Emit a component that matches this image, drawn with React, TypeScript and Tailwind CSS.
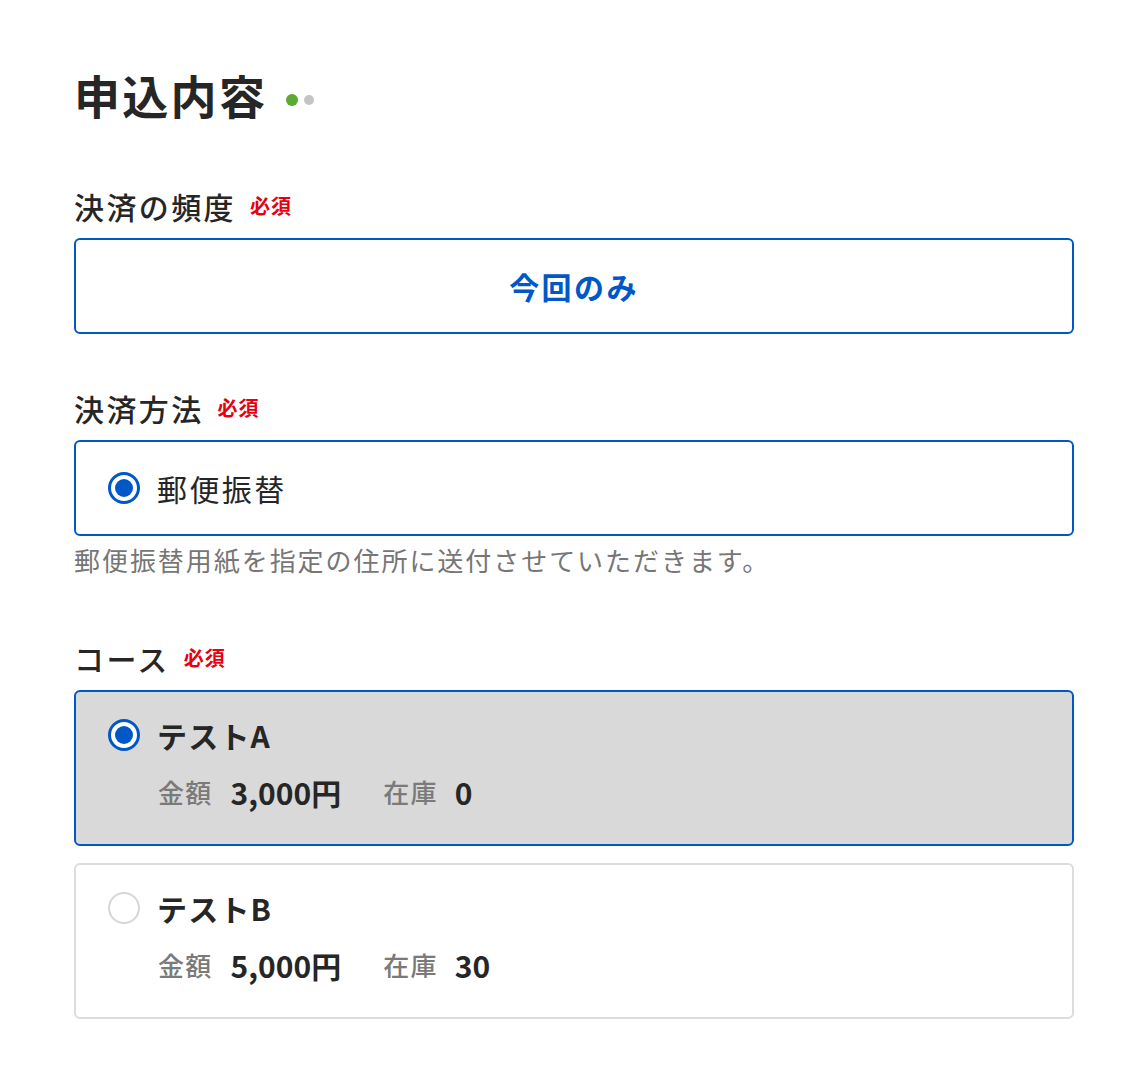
import React from "react";

const font = { fontFamily: '"Noto Sans CJK JP", "Noto Sans", sans-serif' };

function Required() {
  return (
    <span className="ml-[14px] text-[20px] font-bold text-[#e60012] tracking-[0.05em] leading-none">
      必須
    </span>
  );
}

function Label({ children }: { children: React.ReactNode }) {
  return (
    <div className="flex items-center h-[44px] mb-[10px]">
      <span className="text-[30px] font-medium text-[#262626] tracking-[0.08em] leading-none">
        {children}
      </span>
      <Required />
    </div>
  );
}

function Radio({ checked }: { checked: boolean }) {
  return checked ? (
    <span className="flex items-center justify-center w-[32px] h-[32px] rounded-full border-[3px] border-[#0057c8] bg-white shrink-0">
      <span className="w-[18px] h-[18px] rounded-full bg-[#0057c8]" />
    </span>
  ) : (
    <span className="w-[32px] h-[32px] rounded-full border-2 border-[#d6d6d6] bg-white shrink-0" />
  );
}

function Course({
  name,
  price,
  stock,
  selected,
}: {
  name: string;
  price: string;
  stock: string;
  selected: boolean;
}) {
  return (
    <div
      className={
        selected
          ? "border-2 border-[#0057c8] bg-[#d9d9d9] rounded-[6px] px-[32px] pt-[25px] pb-[32px]"
          : "border-2 border-[#dcdcdc] bg-white rounded-[6px] px-[32px] pt-[25px] pb-[32px]"
      }
    >
      <div className="flex items-center h-[36px] gap-[17px]">
        <Radio checked={selected} />
        <span className="text-[30px] font-bold text-[#262626] tracking-[0.04em] leading-none">
          {name}
        </span>
      </div>
      <div className="flex items-center h-[40px] mt-[19px] pl-[50px]">
        <span className="text-[26px] font-medium text-[#7a7a7a] tracking-[0.05em] leading-none">
          金額
        </span>
        <span className="ml-[18px] text-[30px] font-bold text-[#262626] leading-none">
          {price}
        </span>
        <span className="ml-[42px] text-[26px] font-medium text-[#7a7a7a] tracking-[0.05em] leading-none">
          在庫
        </span>
        <span className="ml-[17px] text-[30px] font-bold text-[#262626] leading-none">
          {stock}
        </span>
      </div>
    </div>
  );
}

export default function App() {
  return (
    <div className="min-h-[1072px] bg-white" style={font}>
      <div className="w-[1000px] ml-[74px] pt-[64px] pb-[54px]">
        <div className="flex items-center h-[60px]">
          <h1 className="text-[46px] font-bold text-[#262626] tracking-[0.05em] leading-none">
            申込内容
          </h1>
          <span className="ml-[19px] mt-[12px] w-[12px] h-[12px] rounded-full bg-[#5aab32]" />
          <span className="ml-[6px] mt-[12px] w-[10px] h-[10px] rounded-full bg-[#c4c4c4]" />
        </div>

        <div className="mt-[60px]">
          <Label>決済の頻度</Label>
          <div className="h-[96px] border-2 border-[#0057c8] rounded-[6px] flex items-center justify-center">
            <span className="text-[30px] font-bold text-[#0057c8] tracking-[0.08em] leading-none">
              今回のみ
            </span>
          </div>
        </div>

        <div className="mt-[52px]">
          <Label>決済方法</Label>
          <div className="h-[96px] border-2 border-[#0057c8] rounded-[6px] flex items-center px-[32px] gap-[17px]">
            <Radio checked={true} />
            <span className="text-[30px] text-[#262626] tracking-[0.08em] leading-none">
              郵便振替
            </span>
          </div>
          <div className="mt-[4px] h-[40px] flex items-center text-[26px] text-[#767676] tracking-[0.075em] leading-none">
            郵便振替用紙を指定の住所に送付させていただきます。
          </div>
        </div>

        <div className="mt-[56px]">
          <Label>コース</Label>
          <div className="flex flex-col gap-[17px]">
            <Course name="テストA" price="3,000円" stock="0" selected={true} />
            <Course name="テストB" price="5,000円" stock="30" selected={false} />
          </div>
        </div>
      </div>
    </div>
  );
}
